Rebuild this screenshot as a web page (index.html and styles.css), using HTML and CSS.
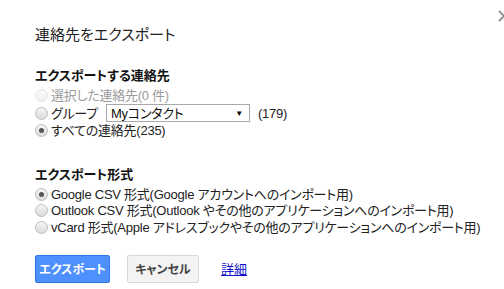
FILE: index.html
```html
<!DOCTYPE html>
<html lang="ja">
<head>
<meta charset="utf-8">
<link rel="stylesheet" href="styles.css">
</head>
<body>
<div class="dialog">
  <span class="close" aria-label="閉じる"><svg width="14" height="14" viewBox="0 0 14 14"><path d="M2 2 L12 12 M12 2 L2 12" stroke="#9a9a9a" stroke-width="2.2" fill="none"/></svg></span>
  <h1 class="title">連絡先をエクスポート</h1>

  <section class="group first">
    <h2 class="heading">エクスポートする連絡先</h2>
    <div class="row disabled"><span class="radio"></span><span class="label">選択した連絡先(0 件)</span></div>
    <div class="row tall"><span class="radio"></span><span class="label">グループ</span><span class="select"><span class="sel-text">Myコンタクト</span><span class="arrow">▼</span></span><span class="count">(179)</span></div>
    <div class="row"><span class="radio checked"></span><span class="label">すべての連絡先(235)</span></div>
  </section>

  <section class="group second">
    <h2 class="heading">エクスポート形式</h2>
    <div class="row"><span class="radio checked"></span><span class="label">Google CSV 形式(Google アカウントへのインポート用)</span></div>
    <div class="row"><span class="radio"></span><span class="label">Outlook CSV 形式(Outlook やその他のアプリケーションへのインポート用)</span></div>
    <div class="row"><span class="radio"></span><span class="label">vCard 形式(Apple アドレスブックやその他のアプリケーションへのインポート用)</span></div>
  </section>

  <div class="actions">
    <span class="btn primary">エクスポート</span>
    <span class="btn secondary">キャンセル</span>
    <a class="link" href="#">詳細</a>
  </div>
</div>
</body>
</html>
```

FILE: styles.css
```css
html, body {
  margin: 0;
  padding: 0;
  background: #fff;
}
body {
  font-family: "Liberation Sans", Arial, "Noto Sans CJK JP", sans-serif;
  font-feature-settings: "palt";
  font-size: 13px;
  color: #222;
}
.dialog {
  position: relative;
  width: 504px;
  height: 289px;
  overflow: hidden;
  padding: 25px 0 0 35px;
  box-sizing: border-box;
}
.close {
  position: absolute;
  top: 9px;
  right: -7px;
  width: 14px;
  height: 14px;
  display: block;
}
.close svg { display: block; }
.title {
  margin: 0;
  font-size: 15px;
  font-weight: normal;
  line-height: 19px;
  height: 19px;
  color: #222;
}
.group.first { margin-top: 24px; }
.group.second { margin-top: 28px; }
.heading {
  margin: 0 0 3px 0;
  font-size: 13px;
  font-weight: bold;
  line-height: 16px;
  color: #111;
}
.row {
  display: flex;
  align-items: center;
  height: 17px;
  line-height: 17px;
  white-space: nowrap;
  letter-spacing: -0.25px;
}
.group.second .row { height: 16.5px; }
.row.tall { height: 18px; }
.radio {
  width: 11px;
  height: 11px;
  border: 1px solid #bdbdbd;
  border-radius: 50%;
  background: linear-gradient(#f4f4f4, #dcdcdc);
  box-sizing: content-box;
  margin-right: 3px;
  position: relative;
  flex: none;
}
.radio.checked::after {
  content: "";
  position: absolute;
  left: 3px;
  top: 3px;
  width: 5px;
  height: 5px;
  border-radius: 50%;
  background: #555;
}
.row.disabled .radio {
  border-color: #e2e2e2;
  background: linear-gradient(#fbfbfb, #efefef);
}
.row.disabled .label { color: #9a9a9a; }
.select {
  display: flex;
  align-items: center;
  justify-content: space-between;
  width: 144px;
  height: 18px;
  box-sizing: border-box;
  border: 1px solid #a9a9a9;
  margin-left: 8px;
  padding: 0 6px 0 4px;
  background: #fff;
  color: #111;
}
.arrow {
  font-size: 8px;
  color: #000;
}
.count { margin-left: 8px; }
.actions {
  display: flex;
  align-items: center;
  margin-top: 19px;
}
.btn {
  display: flex;
  align-items: center;
  justify-content: center;
  height: 28px;
  box-sizing: border-box;
  border-radius: 2px;
  font-size: 12px;
  font-weight: bold;
}
.btn.primary {
  width: 75px;
  background: #4d90fe;
  border: 1px solid #3079ed;
  color: #fff;
}
.btn.secondary {
  width: 72px;
  margin-left: 17px;
  background: #f3f3f3;
  border: 1px solid #d8d8d8;
  color: #444;
}
.link {
  margin-left: 22px;
  color: #1111cc;
  text-decoration: underline;
  font-size: 13px;
}
```
